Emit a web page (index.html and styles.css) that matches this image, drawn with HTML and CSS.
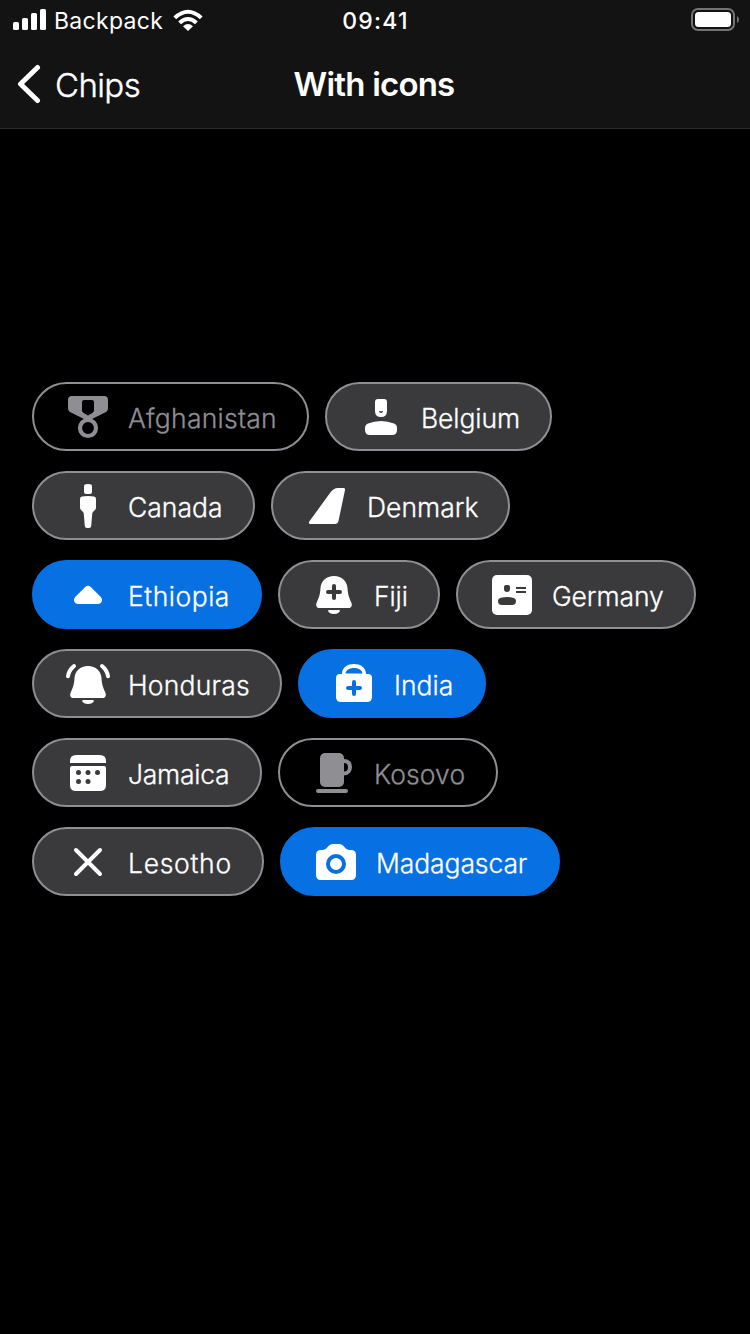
FILE: index.html
```html
<!DOCTYPE html>
<html lang="en">
<head>
<meta charset="utf-8">
<title>With icons</title>
<link rel="stylesheet" href="styles.css">
</head>
<body>
<header class="header">
  <div class="status">
    <div class="status-left">
      <svg class="signal" width="34" height="22" viewBox="0 0 34 22"><rect x="0" y="13" width="6" height="8" rx="1.5"/><rect x="9" y="9" width="6" height="12" rx="1.5"/><rect x="18" y="4" width="6" height="17" rx="1.5"/><rect x="27" y="0" width="6" height="21" rx="1.5"/></svg>
      <span class="carrier">Backpack</span>
      <svg class="wifi" width="30" height="22" viewBox="0 0 30 22"><path d="M0.4 7.4Q15-6 29.6 7.4L26.8 10.3Q15-0.8 3.2 10.3Z"/><path d="M5.2 12.4Q15 3.6 24.8 12.4L22 15.2Q15 9 8 15.2Z"/><path d="M10 17.2Q15 13 20 17.2L15 22Z"/></svg>
    </div>
    <div class="time">09:41</div>
    <svg class="battery" width="50" height="26" viewBox="0 0 50 26"><rect x="2" y="2" width="42" height="21" rx="6" fill="none" stroke="#747474" stroke-width="2"/><rect x="5" y="5" width="36" height="15" rx="3.5" fill="#fff"/><path d="M47 9q2 1.2 2 3.5T47 16z" fill="#747474"/></svg>
  </div>
  <nav class="nav">
    <a class="back"><svg width="24" height="40" viewBox="0 0 24 40"><path d="M20.500 3.500L3.500 20L20.500 36.500" fill="none" stroke="#fff" stroke-width="5" stroke-linecap="round" stroke-linejoin="round"/></svg><span class="back-label">Chips</span></a>
    <h1 class="title">With icons</h1>
  </nav>
</header>
<main class="chips">
  <div class="row">
    <button class="chip disabled afghanistan"><svg viewBox="0 0 48 48"><path fill-rule="evenodd" d="M8 4H40Q44 4 44 8V16.500Q44 19 41.500 20.300L28 27H20L6.500 20.300Q4 19 4 16.500V8Q4 4 8 4ZM20 8Q18 8 18 10V18.500Q18 20 19.300 20.800L24 23.500L28.700 20.800Q30 20 30 18.500V10Q30 8 28 8Z"/><circle cx="24" cy="36" r="8" fill="none" stroke="currentColor" stroke-width="4.200"/></svg><span>Afghanistan</span></button>
    <button class="chip belgium"><svg viewBox="0 0 48 48"><path fill-rule="evenodd" d="M21 7H27Q30 7 30 10V19Q30 25 24 25T18 19V10Q18 7 21 7ZM22 18.700V19Q22 21 24 21T26 19V18.700Q24 20 22 18.700Z"/><path d="M8 36Q8 33 11 31.600Q17 29 24 29T37 31.600Q40 33 40 36V38Q40 43 35 43H13Q8 43 8 38Z"/></svg><span>Belgium</span></button>
  </div>
  <div class="row">
    <button class="chip canada"><svg viewBox="0 0 48 48"><path d="M20 5Q20 3.500 22 3.200Q24 2.800 26 3.200Q28 3.500 28 5V11Q28 13 26 13H22Q20 13 20 11ZM16 18Q16 15.800 18 15.500Q24 14.600 30 15.500Q32 15.800 32 18V26.500Q32 28 31 29L29.200 30.800Q28.300 31.700 28.200 33L27.200 45Q27 47 25 47H23Q21 47 20.800 45L19.800 33Q19.700 31.700 18.800 30.800L17 29Q16 28 16 26.500Z"/></svg><span>Canada</span></button>
    <button class="chip denmark"><svg viewBox="0 0 48 48"><path d="M35 7H40.500Q42.300 7 42 9L35.500 40Q34.800 43 32 43H7.500Q5 43 6.300 40.500L27 12Q30.500 7 35 7Z"/></svg><span>Denmark</span></button>
  </div>
  <div class="row">
    <button class="chip on ethiopia"><svg viewBox="0 0 48 48"><path d="M21.200 17Q24 14.600 26.800 17L36.600 26.700Q39 29.500 37.500 32Q36.500 34 34 34H14Q11.500 34 10.500 32Q9 29.500 11.400 26.700Z"/></svg><span>Ethiopia</span></button>
    <button class="chip fiji"><svg viewBox="0 0 48 48"><path d="M24 6C32 6 37 11 37.500 18C38 26 39.500 28 41.300 32.500C42.800 36 41 38 38.500 38H9.500C7 38 5.200 36 6.700 32.500C8.500 28 10 26 10.500 18C11 11 16 6 24 6ZM18 41Q18 40 19.500 40H28.500Q30 40 30 41Q28.500 44 24 44T18 41Z"/><path class="cut" d="M18 22H30M24 16V28"/></svg><span>Fiji</span></button>
    <button class="chip germany"><svg viewBox="0 0 48 48"><rect x="4" y="5" width="40" height="40" rx="5"/><path class="hole" d="M18 15H20Q22 15 22 17V19Q22 22 19 22T16 19V17Q16 15 18 15ZM10 31Q10 28.500 13 27.700Q19 26.300 25 27.700Q28 28.500 28 31Q28 35 24 35H14Q10 35 10 31ZM28 17H38V19H28ZM28 21H38V23H28Z"/></svg><span>Germany</span></button>
  </div>
  <div class="row">
    <button class="chip honduras"><svg viewBox="0 0 48 48"><path d="M24 7C32 7 37 12 37.500 19C38 27 39.500 29 41.300 33.500C42.800 37 41 39 38.500 39H9.500C7 39 5.200 37 6.700 33.500C8.500 29 10 27 10.500 19C11 12 16 7 24 7ZM18 42Q18 41 19.500 41H28.500Q30 41 30 42Q28.500 45 24 45T18 42Z"/><path class="line" d="M10 7Q5 11 4 17.200M38 7Q43 11 44 17.200"/></svg><span>Honduras</span></button>
    <button class="chip on india"><svg viewBox="0 0 48 48"><path fill-rule="evenodd" d="M12 15C12 8 18 5 24 5S36 8 36 15H38Q42 15 42 19V38Q42 43 37 43H11Q6 43 6 38V19Q6 15 10 15ZM15.500 14.500H32.500C32 10.500 28 9 24 9S16 10.500 15.500 14.500Z"/><path class="cut" d="M18 29H30M24 23V35"/></svg><span>India</span></button>
  </div>
  <div class="row">
    <button class="chip jamaica"><svg viewBox="0 0 48 48"><path d="M6 15V13Q6 7 12 7H36Q42 7 42 13V15ZM8 18H40Q42 18 42 20V37Q42 43 36 43H12Q6 43 6 37V20Q6 18 8 18Z"/><g class="hole"><circle cx="14.500" cy="24.500" r="2.500"/><circle cx="24" cy="24.500" r="2.500"/><circle cx="33.500" cy="24.500" r="2.500"/><circle cx="14.500" cy="33.500" r="2.500"/><circle cx="24" cy="33.500" r="2.500"/></g></svg><span>Jamaica</span></button>
    <button class="chip disabled kosovo"><svg viewBox="0 0 48 48"><rect x="10" y="5" width="24" height="34" rx="5"/><path class="line" d="M33 13H34C38 13 40 15.500 40 19S38 25.500 34 25.500H33M8 43H36"/></svg><span>Kosovo</span></button>
  </div>
  <div class="row">
    <button class="chip lesotho"><svg viewBox="0 0 48 48"><path class="line" d="M12 13L36 37M36 13L12 37"/></svg><span>Lesotho</span></button>
    <button class="chip on madagascar"><svg viewBox="0 0 48 48"><path d="M20.500 7H27.500Q29.500 7 31 8.500L33.500 11.300Q35 13 37.500 13H39Q44 13 44 18V38Q44 43 39 43H9Q4 43 4 38V18Q4 13 9 13H10.500Q13 13 14.500 11.300L17 8.500Q18.500 7 20.500 7Z"/><circle class="cut" cx="24" cy="27" r="8"/></svg><span>Madagascar</span></button>
  </div>
</main>
</body>
</html>
```
FILE: styles.css
```css
* { box-sizing: border-box; }
body { margin: 0; min-height: 1334px; background: #000; color: #fff; font-family: Inter, "Noto Sans", sans-serif; }
.header { height: 129px; background: #131313; border-bottom: 1px solid #2b2b2b; }
.status { height: 40px; padding: 0 10px 0 13px; display: grid; grid-template-columns: 1fr auto 1fr; align-items: center; font-size: 23px; line-height: 28px; }
.status-left { display: flex; align-items: center; }
.signal, .wifi { fill: #fff; display: block; }
.carrier { width: 110px; margin-left: 7px; margin-right: 9px; padding-top: 2px; letter-spacing: 0.3px; white-space: nowrap; }
.time { padding-top: 2px; padding-right: 2px; font-weight: 500; letter-spacing: 1.2px; }
.battery { justify-self: end; display: block; }
.nav { height: 88px; padding: 0 19px 0 17px; display: grid; grid-template-columns: 1fr auto 1fr; align-items: center; }
.back { display: flex; align-items: center; gap: 14px; font-size: 33px; line-height: 42px; }
.back-label { padding-top: 1px; letter-spacing: -0.6px; font-weight: 300; -webkit-text-stroke: 0.4px currentColor; }
.title { margin: 0; font-size: 33px; line-height: 40px; font-weight: 600; letter-spacing: -0.8px; }
.chips { padding: 253px 32px 0; display: flex; flex-direction: column; gap: 20px; }
.row { display: flex; gap: 16px; }
.chip { --bg: #3a3a3c; height: 69px; flex: none; display: flex; align-items: center; gap: 16px; padding: 0 0 0 30px; border: 2px solid #8e8e93; border-radius: 35px; background: var(--bg); color: #fff; font-family: inherit; font-size: 26.500px; line-height: 32px; font-weight: 300; white-space: nowrap; }
.chip svg { width: 48px; height: 48px; flex: none; fill: currentColor; position: relative; top: -0.5px; }
.chip span { padding-top: 3px; -webkit-text-stroke: 0.3px currentColor; }
.chip .cut { fill: none; stroke: var(--bg); stroke-width: 4; stroke-linecap: round; }
.chip .hole { fill: var(--bg); }
.chip .line { fill: none; stroke: currentColor; stroke-width: 4; stroke-linecap: round; }
.on { --bg: #0770e3; border-color: #0770e3; }
.disabled { --bg: #000; color: #8e8e93; }
.afghanistan { width: 277px; letter-spacing: 0.25px; }
.belgium { width: 227px; letter-spacing: -0.1px; }
.canada { width: 223px; }
.denmark { width: 239px; }
.ethiopia { width: 230px; letter-spacing: 0.5px; }
.fiji { width: 162px; letter-spacing: -0.1px; }
.germany { width: 240px; letter-spacing: -0.1px; }
.honduras { width: 250px; letter-spacing: 0.2px; }
.india { width: 188px; }
.jamaica { width: 230px; letter-spacing: -0.25px; }
.kosovo { width: 220px; letter-spacing: 0.1px; }
.lesotho { width: 232px; letter-spacing: 0.7px; }
.madagascar { width: 280px; letter-spacing: -0.1px; }
```
